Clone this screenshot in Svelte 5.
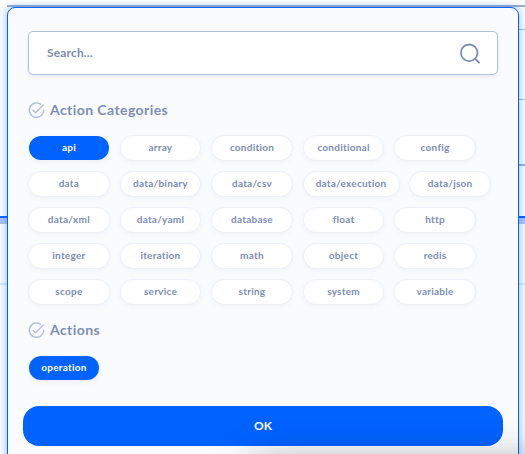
<script>
  const rows = [
    ['api', 'array', 'condition', 'conditional', 'config'],
    ['data', 'data/binary', 'data/csv', 'data/execution', 'data/json'],
    ['data/xml', 'data/yaml', 'database', 'float', 'http'],
    ['integer', 'iteration', 'math', 'object', 'redis'],
    ['scope', 'service', 'string', 'system', 'variable']
  ];
  let selected = $state('api');
  let query = $state('');
</script>

{#snippet heading(label)}
  <h2>
    <svg width="17" height="17" viewBox="0 0 17 17" fill="none" stroke="#b3c0dc" stroke-width="1.5">
      <path d="M13.1 2.6A7.2 7.2 0 1 0 15.7 7.6" />
      <path d="M4.7 8 7.6 10.8 15.5 2.8" />
    </svg>
    <span>{label}</span>
  </h2>
{/snippet}

<div class="screen">
  <div class="line top"></div>
  <div class="line first"></div>
  <div class="line second"></div>
  <div class="line third"></div>
  <div class="band"></div>
  <div class="line faint"></div>

  <section class="dialog">
    <label class="search">
      <input type="text" placeholder="Search..." bind:value={query} />
      <svg width="22" height="22" viewBox="0 0 22 22" fill="none" stroke="#7b8db5" stroke-width="1.8">
        <circle cx="10.2" cy="10.8" r="8.3" />
        <path d="m16 16.6 4.6 4.6" />
      </svg>
    </label>

    {@render heading('Action Categories')}
    <div class="rows">
      {#each rows as row}
        <div class="row">
          {#each row as name}
            <button class="chip" class:active={selected === name} onclick={() => (selected = name)}><span>{name}</span></button>
          {/each}
        </div>
      {/each}
    </div>

    <div class="actions">
      {@render heading('Actions')}
      <button class="chip active operation"><span>operation</span></button>
    </div>

    <button class="ok">OK</button>
  </section>
  <div class="shade"></div>
</div>

<style>
  :global(body) { background: #fff; }
  .screen {
    position: relative;
    box-sizing: border-box;
    width: 525px;
    height: 454px;
    padding: 7px 6px 0 7px;
    overflow: hidden;
    background: linear-gradient(#fff 0 7px, #fbfcff 7px 216px, #fafbff 216px);
    font-family: Lato, "Open Sans", sans-serif;
  }
  .line { position: absolute; right: 0; height: 1px; left: 519px; background: #acbddf; }
  .line.top { top: 5px; left: 7px; height: 2px; background: #9badd0; }
  .line.first { top: 29px; }
  .line.second { top: 99px; }
  .line.third { top: 164px; height: 2px; background: #9badd6; }
  .line.faint { top: 283px; left: 0; height: 2px; background: #dbe5f8; }
  .band { position: absolute; top: 216px; left: 0; right: 0; height: 6px; border-top: 2px solid #0062ff; background: #adc3fb; }
  .dialog {
    position: relative;
    box-sizing: border-box;
    width: 512px;
    height: 480px;
    padding: 23px 15px 0 20px;
    border: 1px solid #0062ff;
    border-radius: 8px;
    background: #fafbfd;
    box-shadow: 0 0 10px rgba(0, 98, 255, 0.38);
  }
  .search {
    display: flex;
    align-items: center;
    box-sizing: border-box;
    width: 470px;
    height: 44px;
    padding: 0 16px 0 18px;
    border: 1px solid #b3c0db;
    border-radius: 5px;
    background: #fff;
    box-shadow: 0 2px 4px rgba(70, 90, 130, 0.1);
  }
  input {
    flex: 1;
    min-width: 0;
    padding: 0;
    border: 0;
    outline: 0;
    background: none;
    font: 700 12px/18px Lato, sans-serif;
    letter-spacing: 0.15px;
    color: #7b8db5;
  }
  input::placeholder { color: #7b8db5; opacity: 1; }
  h2 {
    display: flex;
    align-items: center;
    gap: 5px;
    height: 20px;
    margin: 25px 0 15px;
    font-size: 14px;
    line-height: 20px;
    font-weight: 700;
    letter-spacing: 0.42px;
    color: #7b8db5;
  }
  h2 span { margin-top: -1px; }
  .rows { display: flex; flex-direction: column; gap: 10px; }
  .row { display: flex; gap: 9.75px; }
  .chip {
    display: flex;
    align-items: center;
    justify-content: center;
    box-sizing: border-box;
    min-width: 81.8px;
    height: 26px;
    padding: 0 12px;
    border: 1px solid #eef1f8;
    border-radius: 13px;
    background: #fff;
    background-clip: padding-box;
    box-shadow: 0 2px 4px rgba(50, 80, 140, 0.05);
    color: #7b8db5;
    font: 700 10px/14px Lato, sans-serif;
    letter-spacing: 0.25px;
    white-space: nowrap;
  }
  .chip span { position: relative; top: -1px; }
  .chip.active { border-color: transparent; background-color: #0062ff; color: #fff; }
  .actions h2 { margin: 15px 0 15px; }
  .chip.operation { min-width: 72px; }
  .ok {
    display: block;
    width: 480px;
    height: 40px;
    margin: 25px 0 0 -5px;
    padding: 0;
    border: 0;
    border-radius: 16px;
    background: #0062ff;
    color: #fff;
    font: 700 12px/40px Lato, sans-serif;
  }
  .shade {
    position: absolute;
    top: 464px;
    left: 250px;
    width: 500px;
    height: 200px;
    box-shadow: 0 0 38px rgba(0, 0, 0, 0.36);
  }
</style>
